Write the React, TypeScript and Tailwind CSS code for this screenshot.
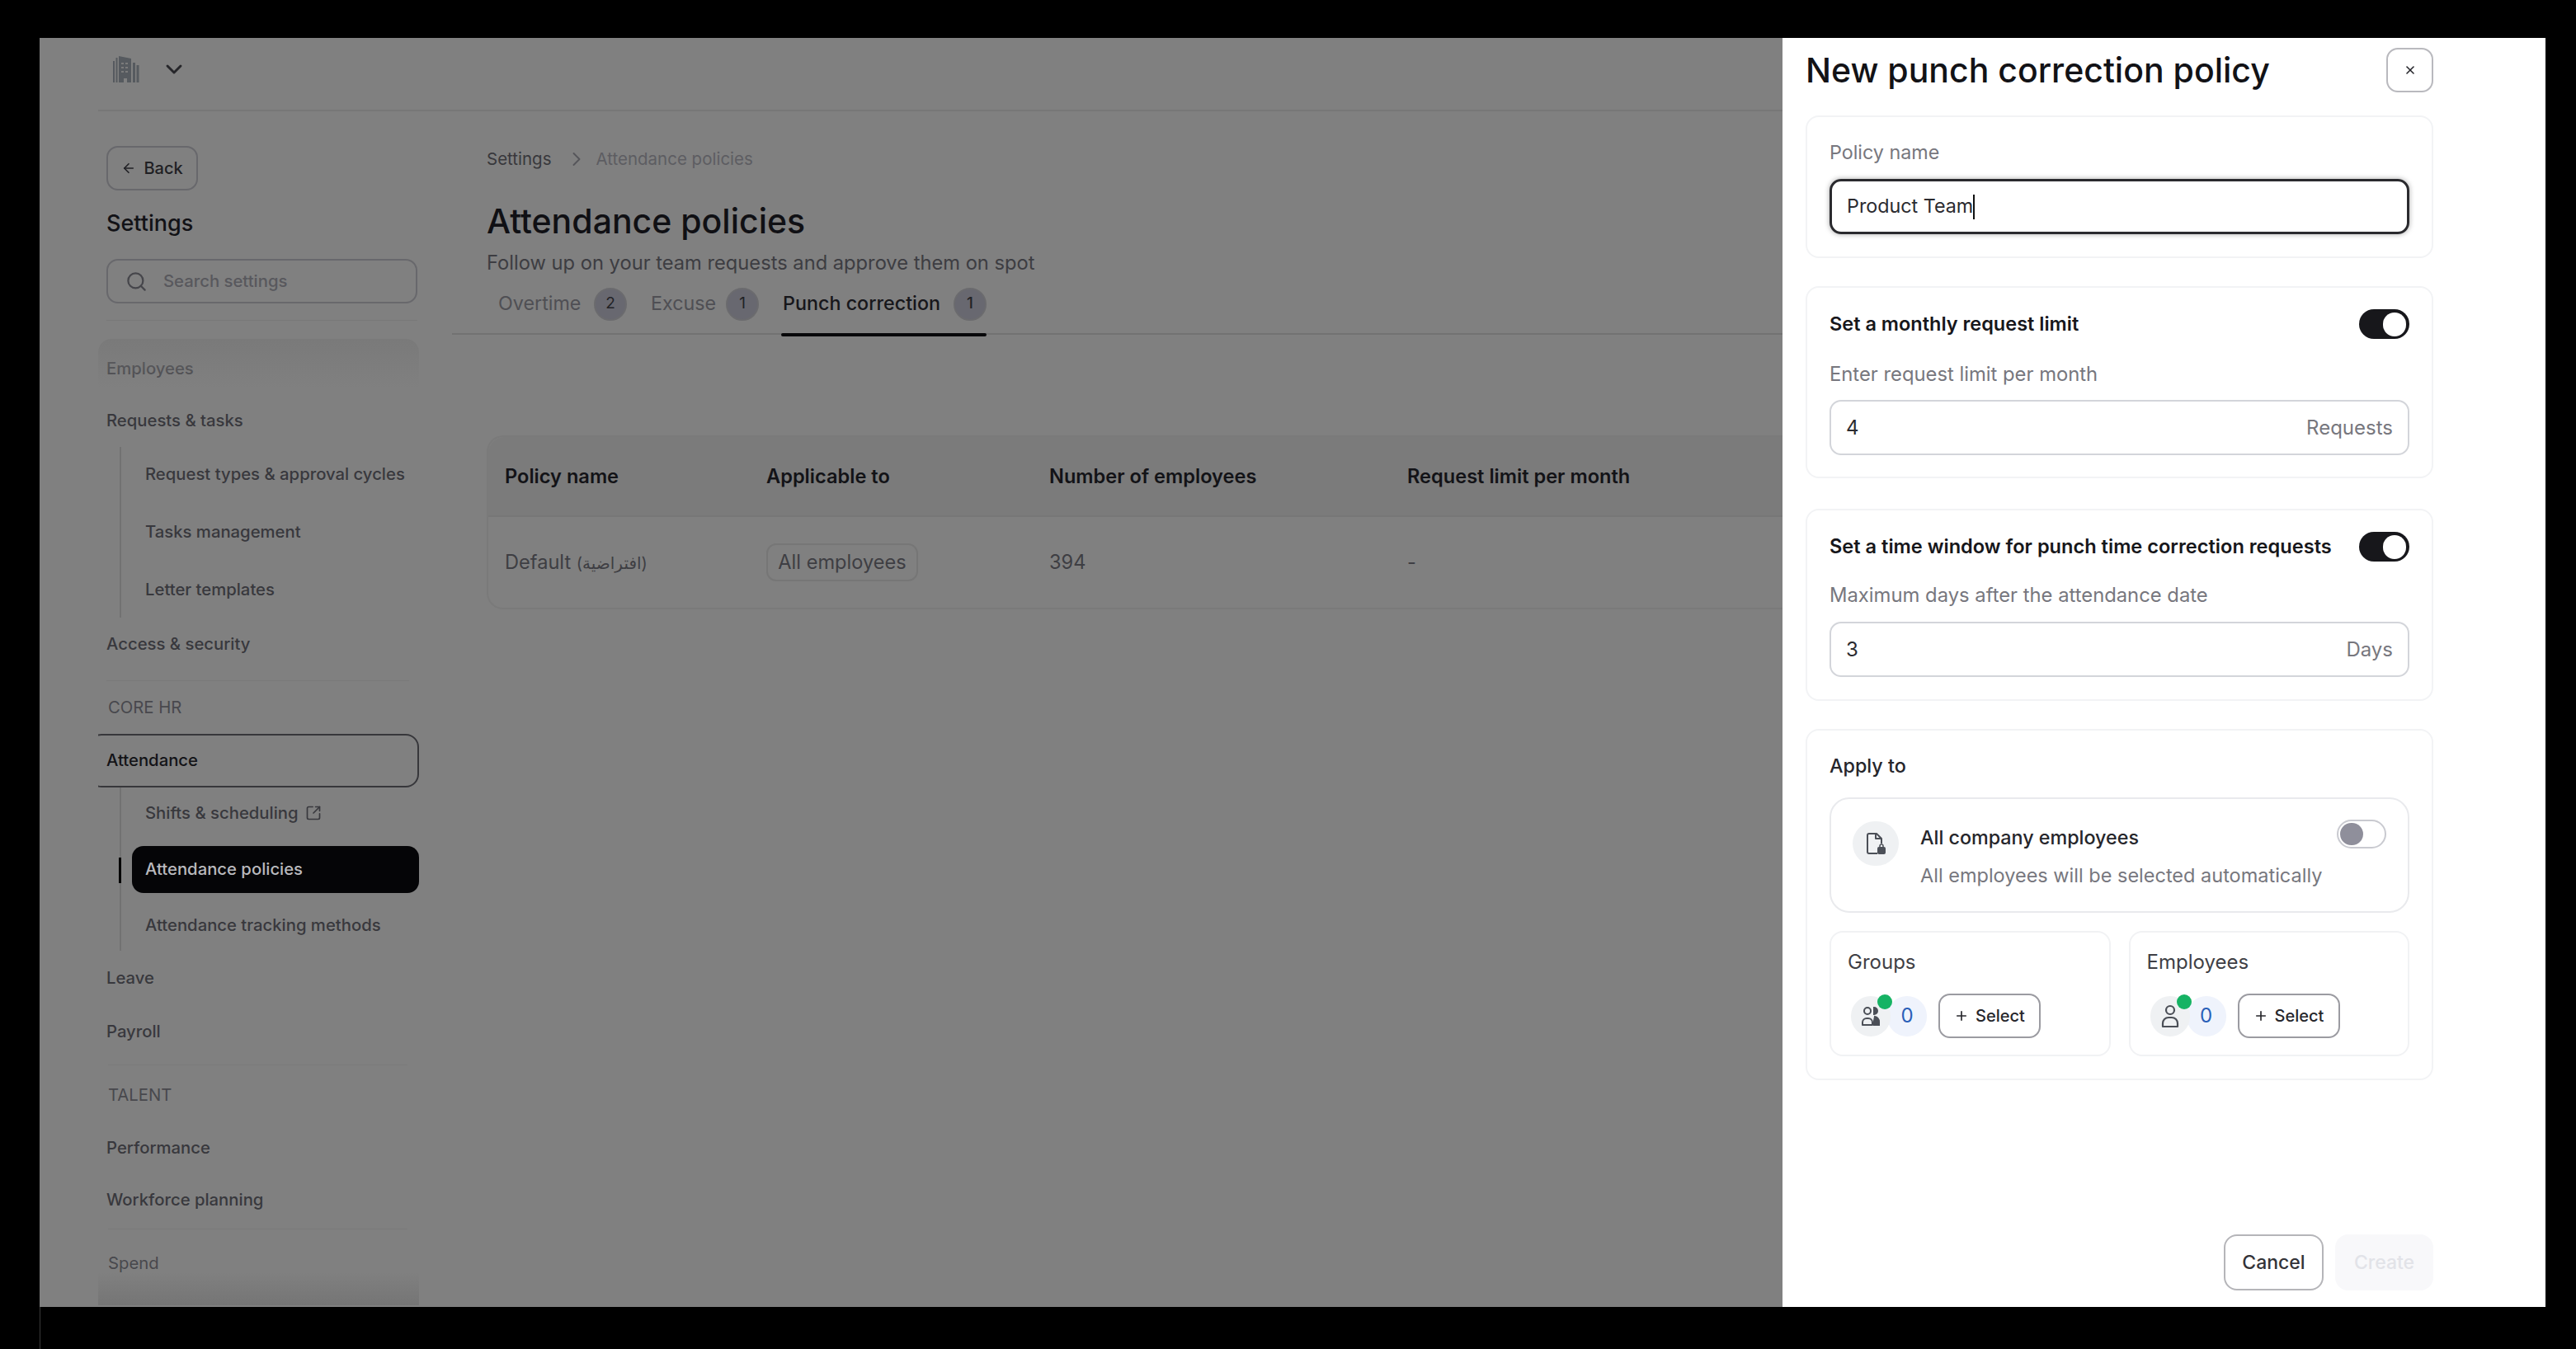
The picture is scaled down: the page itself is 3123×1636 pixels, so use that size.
import React from "react";
import { ArrowLeft, ChevronDown, ChevronRight, Plus, Search, SquareArrowOutUpRight, X } from "lucide-react";

function BuildingIcon() {
  return (
    <svg width="32" height="33" viewBox="0 0 32 33" fill="#565a5f">
      <rect x="0" y="7" width="2" height="26" />
      <rect x="3.5" y="3" width="2" height="30" />
      <path d="M7 1l15 3v29h-5v-5h-4v5H7z" />
      <rect x="24" y="9" width="3" height="24" />
      <rect x="28.5" y="12" width="3" height="21" />
      <g fill="#7b7b7b">
        <rect x="10" y="9" width="3" height="2" />
        <rect x="15" y="9" width="3" height="2" />
        <rect x="10" y="14" width="3" height="2" />
        <rect x="15" y="14" width="3" height="2" />
        <rect x="10" y="19" width="3" height="2" />
        <rect x="15" y="19" width="3" height="2" />
      </g>
    </svg>
  );
}

function FileLockIcon() {
  return (
    <svg width="26" height="28" viewBox="0 0 26 28" fill="none" stroke="#4b4f57" strokeWidth="2">
      <path d="M15 26H5a2 2 0 0 1-2-2V4a2 2 0 0 1 2-2h9l6 6v6" strokeLinejoin="round" />
      <path d="M13 2v6h7" strokeLinejoin="round" />
      <rect x="16" y="19" width="8" height="7" rx="1" fill="#4b4f57" />
      <path d="M18 19v-2a2 2 0 0 1 4 0v2" strokeWidth="1.5" />
    </svg>
  );
}

function GroupIcon() {
  return (
    <svg width="24" height="26" viewBox="0 0 24 26" fill="none" stroke="#4b4f57" strokeWidth="2">
      <circle cx="8" cy="7" r="4" />
      <path d="M2 24v-3a5 5 0 0 1 5-5h2a5 5 0 0 1 5 5v3z" strokeLinejoin="round" />
      <path d="M16 3a4 4 0 0 1 0 8z" fill="#4b4f57" />
      <path d="M17 14a6 6 0 0 1 5 6v4h-6v-5z" fill="#4b4f57" />
    </svg>
  );
}

function PersonIcon() {
  return (
    <svg width="22" height="30" viewBox="0 0 22 30" fill="none" stroke="#4b4f57" strokeWidth="2.2">
      <circle cx="11" cy="8" r="5" />
      <path d="M2 28v-4a7 7 0 0 1 7-7h4a7 7 0 0 1 7 7v4z" strokeLinejoin="round" />
    </svg>
  );
}

function Toggle({ on, className }: { on: boolean; className?: string }) {
  if (on) {
    return (
      <span className={`flex h-[36px] w-[61px] shrink-0 items-center justify-end rounded-full bg-[#17171b] pr-[4px] ${className ?? ""}`}>
        <span className="h-[29px] w-[28px] rounded-full bg-white" />
      </span>
    );
  }
  return (
    <span className={`flex h-[35px] w-[60px] shrink-0 items-center rounded-full border-2 border-[#c9cad0] bg-white pl-[2px] ${className ?? ""}`}>
      <span className="h-[27px] w-[28px] rounded-full bg-[#8f8f9b]" />
    </span>
  );
}

function Badge({ value }: { value: number }) {
  return (
    <span className="flex h-[40px] w-[40px] shrink-0 items-center justify-center rounded-full border-2 border-[#6b6b6e] bg-[#686870] text-[19px] text-[#222226]">
      {value}
    </span>
  );
}

function GroupBox({ label, icon, className }: { label: string; icon: React.ReactNode; className?: string }) {
  return (
    <div className={`h-[152px] rounded-[16px] border-2 border-[#f1f2f4] ${className ?? ""}`}>
      <div className="flex h-[70px] items-center pl-[20px] pt-[2px] text-[24px] text-[#3f3f45]">{label}</div>
      <div className="flex items-center pl-[24px] pt-[4px]">
        <div className="relative flex h-[49px] w-[48px] items-center justify-center rounded-full bg-[#eff1f3]">
          {icon}
          <span className="absolute -top-[2px] right-[-2px] h-[18px] w-[18px] rounded-full bg-[#16b364]" />
        </div>
        <div className="-ml-[4px] flex h-[49px] w-[48px] items-center justify-center rounded-full bg-[#eff3fc] text-[24px] text-[#2a5fb8]">0</div>
        <button className="ml-[14px] flex h-[54px] w-[124px] items-center justify-center gap-[8px] rounded-[14px] border-2 border-[#9b9ba1] text-[20px] font-medium text-[#26262b]">
          <Plus size={18} strokeWidth={2.2} />
          Select
        </button>
      </div>
    </div>
  );
}

export default function App() {
  return (
    <div className="h-[1636px] w-[3123px] overflow-hidden bg-black pl-[48px] pt-[46px] font-[Inter,'DejaVu_Sans',sans-serif]">
      <div className="flex h-[1539px] w-[3038px]">
        {/* page behind the overlay */}
        <div className="flex w-[2113px] flex-col overflow-hidden bg-[#808080]">
          <div className="pl-[71px]">
            <div className="flex h-[89px] items-center gap-[26px] border-b-2 border-[#777777] pb-[12px] pl-[18px]">
              <BuildingIcon />
              <ChevronDown size={32} strokeWidth={2.2} className="text-[#26262a]" />
            </div>
          </div>

          <div className="flex min-h-0 flex-1">
            <aside className="relative ml-[71px] w-[389px] shrink-0 overflow-hidden text-[20.3px] font-medium text-[#38383d]">
              <div className="pl-[10px] pr-[2px]">
                <button className="mt-[42px] flex h-[54px] w-[111px] items-center justify-center gap-[9px] rounded-[14px] border-2 border-[#68686c] text-[20px] text-[#202024]">
                  <ArrowLeft size={18} strokeWidth={2.2} />
                  Back
                </button>
                <h2 className="mt-[20px] flex h-[40px] items-center text-[27px] font-medium text-[#121216]">Settings</h2>
                <div className="mt-[23px] flex h-[54px] items-center gap-[19px] rounded-[14px] border-2 border-[#68686c] pl-[21px] text-[#58585d]">
                  <Search size={27} strokeWidth={2} className="text-[#46464b]" />
                  <span>Search settings</span>
                </div>
                <div className="mt-[20px] border-b border-[#787878]" />
              </div>

              <div className="flex h-[89px] items-end pb-[16px] pl-[10px] text-[#48484d]">Employees</div>
              <div className="flex h-[64px] items-center pl-[10px]">Requests &amp; tasks</div>
              <div className="ml-[26px] border-l-2 border-[#727272] pl-[13px]">
                <div className="flex h-[67px] items-center pl-[16px]">Request types &amp; approval cycles</div>
                <div className="flex h-[72px] items-center pl-[16px]">Tasks management</div>
                <div className="flex h-[68px] items-center pl-[16px]">Letter templates</div>
              </div>
              <div className="flex h-[64px] items-center pl-[10px]">Access &amp; security</div>
              <div className="ml-[10px] mr-[12px] mt-[12px] border-b border-[#7a7a7a]" />
              <div className="flex h-[64px] items-center pl-[12px] font-normal text-[#48484d]">CORE HR</div>
              <div className="-ml-[12px] flex h-[65px] items-center rounded-[16px] border-2 border-[#37373b] pl-[20px] text-[#131317]">Attendance</div>
              <div className="ml-[26px] border-l-2 border-[#727272] pl-[13px]">
                <div className="flex h-[62px] items-center gap-[8px] pl-[16px]">
                  Shifts &amp; scheduling
                  <SquareArrowOutUpRight size={20} strokeWidth={2} />
                </div>
                <div className="relative mt-[9px] flex h-[57px] items-center rounded-[14px] bg-[#050507] pl-[16px] text-[#b9b9bd]">
                  <span className="absolute -left-[16px] top-[14px] h-[31px] w-[3px] bg-black" />
                  Attendance policies
                </div>
                <div className="flex h-[70px] items-center pl-[16px] pt-[8px]">Attendance tracking methods</div>
              </div>
              <div className="flex h-[58px] items-center pl-[10px] pt-[8px]">Leave</div>
              <div className="flex h-[80px] items-center pl-[10px]">Payroll</div>
              <div className="ml-[12px] mr-[14px] border-b border-[#7a7a7a]" />
              <div className="flex h-[72px] items-center pl-[12px] font-normal text-[#48484d]">TALENT</div>
              <div className="flex h-[56px] items-center pl-[10px]">Performance</div>
              <div className="flex h-[70px] items-center pl-[10px]">Workforce planning</div>
              <div className="ml-[12px] mr-[14px] border-b border-[#7a7a7a]" />
              <div className="flex h-[82px] items-center pl-[12px] font-normal text-[#48484d]">Spend</div>

              {/* scroll fades */}
              <div className="absolute left-0 right-0 top-[276px] h-[60px] rounded-t-[16px] bg-gradient-to-b from-[#777777]/70 to-transparent" />
              <div className="absolute bottom-[2px] left-0 right-0 h-[40px] bg-gradient-to-b from-transparent to-[#757575]" />
            </aside>

            <main className="ml-[2px] min-w-0 flex-1 pl-[80px]">
              <div className="mt-[43px] flex h-[30px] items-center gap-[16px] text-[20.5px] text-[#38383c]">
                <span>Settings</span>
                <ChevronRight size={28} strokeWidth={1.6} className="-mr-[6px] text-[#55555a]" />
                <span className="text-[#5d5d62]">Attendance policies</span>
              </div>
              <h1 className="mt-[36px] flex h-[50px] items-center text-[41px] font-medium text-[#101014]">Attendance policies</h1>
              <p className="mt-[11px] flex h-[28px] items-center text-[23.7px] text-[#3d3d42]">Follow up on your team requests and approve them on spot</p>

              <div className="-ml-[42px] flex h-[73px] items-center border-b-2 border-[#727272] pl-[56px] text-[23.3px] text-[#4f4f54]">
                <span className="w-[101px]">Overtime</span>
                <span className="ml-[15px]"><Badge value={2} /></span>
                <span className="ml-[29px] w-[78px]">Excuse</span>
                <span className="ml-[13px]"><Badge value={1} /></span>
                <span className="relative ml-[29px] flex items-center gap-[14px] font-medium text-[#17171b]">
                  <span className="w-[193px] whitespace-nowrap">Punch correction</span>
                  <Badge value={1} />
                  <span className="absolute -left-[2px] right-0 top-[55px] h-[4px] rounded-full bg-[#08080a]" />
                </span>
              </div>

              <div className="mt-[122px] rounded-l-[20px] border-y-2 border-l-2 border-[#7a7a7a] text-[23.6px]">
                <div className="grid h-[97px] grid-cols-[317px_343px_434px_1fr] items-center rounded-tl-[20px] border-b-2 border-[#777777] bg-[#7b7b7b] pl-[20px] font-semibold text-[#131317]">
                  <span>Policy name</span>
                  <span>Applicable to</span>
                  <span>Number of employees</span>
                  <span>Request limit per month</span>
                </div>
                <div className="grid h-[110px] grid-cols-[317px_343px_434px_1fr] items-center pl-[20px] text-[#3e3e43]">
                  <span>Default <span className="text-[20px]">(افتراضية)</span></span>
                  <span className="flex h-[46px] w-[184px] items-center justify-center rounded-[12px] border-2 border-[#767676]">All employees</span>
                  <span>394</span>
                  <span>-</span>
                </div>
              </div>
            </main>
          </div>
        </div>

        {/* drawer */}
        <div className="flex w-[925px] flex-col bg-white pb-[20px] pl-[28px] pr-[136px]">
          <div className="flex items-center justify-between pt-[12px]">
            <h1 className="text-[41px] font-medium leading-[54px] text-[#121216]">New punch correction policy</h1>
            <button className="flex h-[54px] w-[57px] items-center justify-center rounded-[14px] border-2 border-[#b9b9be] text-[#26262b]">
              <X size={16} strokeWidth={2.4} />
            </button>
          </div>

          <section className="mt-[28px] h-[173px] rounded-[16px] border-2 border-[#f2f3f5] px-[27px] pt-[28px]">
            <div className="flex h-[30px] items-center text-[23.3px] text-[#77777e]">Policy name</div>
            <div className="mt-[17px] flex h-[67px] items-center rounded-[14px] border-[3px] border-[#2a2a2e] pl-[18px] text-[23.3px] text-[#2b2b30] shadow-[0_0_6px_rgba(0,0,0,0.35)]">
              Product Team
              <span className="h-[30px] w-[2px] bg-[#111111]" />
            </div>
          </section>

          <section className="mt-[34px] h-[233px] rounded-[16px] border-2 border-[#f2f3f5] px-[27px] pt-[26px]">
            <div className="flex h-[36px] items-center justify-between">
              <span className="text-[23.5px] font-semibold text-[#17171b]">Set a monthly request limit</span>
              <Toggle on />
            </div>
            <div className="mt-[28px] flex h-[30px] items-center text-[23.8px] text-[#77777e]">Enter request limit per month</div>
            <div className="mt-[16px] flex h-[67px] items-center justify-between rounded-[14px] border-2 border-[#d3d5da] px-[18px] text-[24px]">
              <span className="text-[#2b2b30]">4</span>
              <span className="text-[#77777e]">Requests</span>
            </div>
          </section>

          <section className="mt-[37px] h-[233px] rounded-[16px] border-2 border-[#f2f3f5] px-[27px] pt-[26px]">
            <div className="flex h-[36px] items-center justify-between">
              <span className="text-[23.6px] font-semibold text-[#17171b]">Set a time window for punch time correction requests</span>
              <Toggle on />
            </div>
            <div className="mt-[26px] flex h-[30px] items-center text-[23.8px] text-[#77777e]">Maximum days after the attendance date</div>
            <div className="mt-[17px] flex h-[67px] items-center justify-between rounded-[14px] border-2 border-[#d3d5da] px-[18px] text-[24px]">
              <span className="text-[#2b2b30]">3</span>
              <span className="text-[#77777e]">Days</span>
            </div>
          </section>

          <section className="mt-[34px] h-[426px] rounded-[16px] border-2 border-[#f2f3f5] px-[27px] pt-[28px]">
            <div className="flex h-[30px] items-center text-[23.3px] font-medium text-[#26262b]">Apply to</div>
            <div className="mt-[23px] flex h-[140px] items-start rounded-[24px] border-2 border-[#e9eaed] pl-[26px] pr-[26px] pt-[27px]">
              <div className="flex h-[54px] w-[56px] shrink-0 items-center justify-center rounded-full bg-[#eff1f3]">
                <FileLockIcon />
              </div>
              <div className="ml-[26px] flex-1">
                <div className="flex h-[40px] items-center text-[23.3px] font-medium text-[#26262b]">All company employees</div>
                <div className="mt-[11px] flex h-[30px] items-center whitespace-nowrap text-[23.5px] text-[#77777e]">All employees will be selected automatically</div>
              </div>
              <Toggle on={false} className="-mt-[2px]" />
            </div>
            <div className="mt-[22px] flex gap-[22px]">
              <GroupBox label="Groups" icon={<GroupIcon />} className="w-[341px]" />
              <GroupBox label="Employees" icon={<PersonIcon />} className="w-[341px]" />
            </div>
          </section>

          <div className="mt-auto flex justify-end gap-[14px]">
            <button className="h-[68px] w-[121px] rounded-[16px] border-2 border-[#b5b5b9] text-[23px] font-medium text-[#333338]">Cancel</button>
            <button className="h-[68px] w-[119px] rounded-[16px] bg-[#f8f8fa] text-[23px] font-medium text-[#e2e3e8]">Create</button>
          </div>
        </div>
      </div>
      <div className="h-[51px] w-px bg-[#3a3a3a]" />
    </div>
  );
}
